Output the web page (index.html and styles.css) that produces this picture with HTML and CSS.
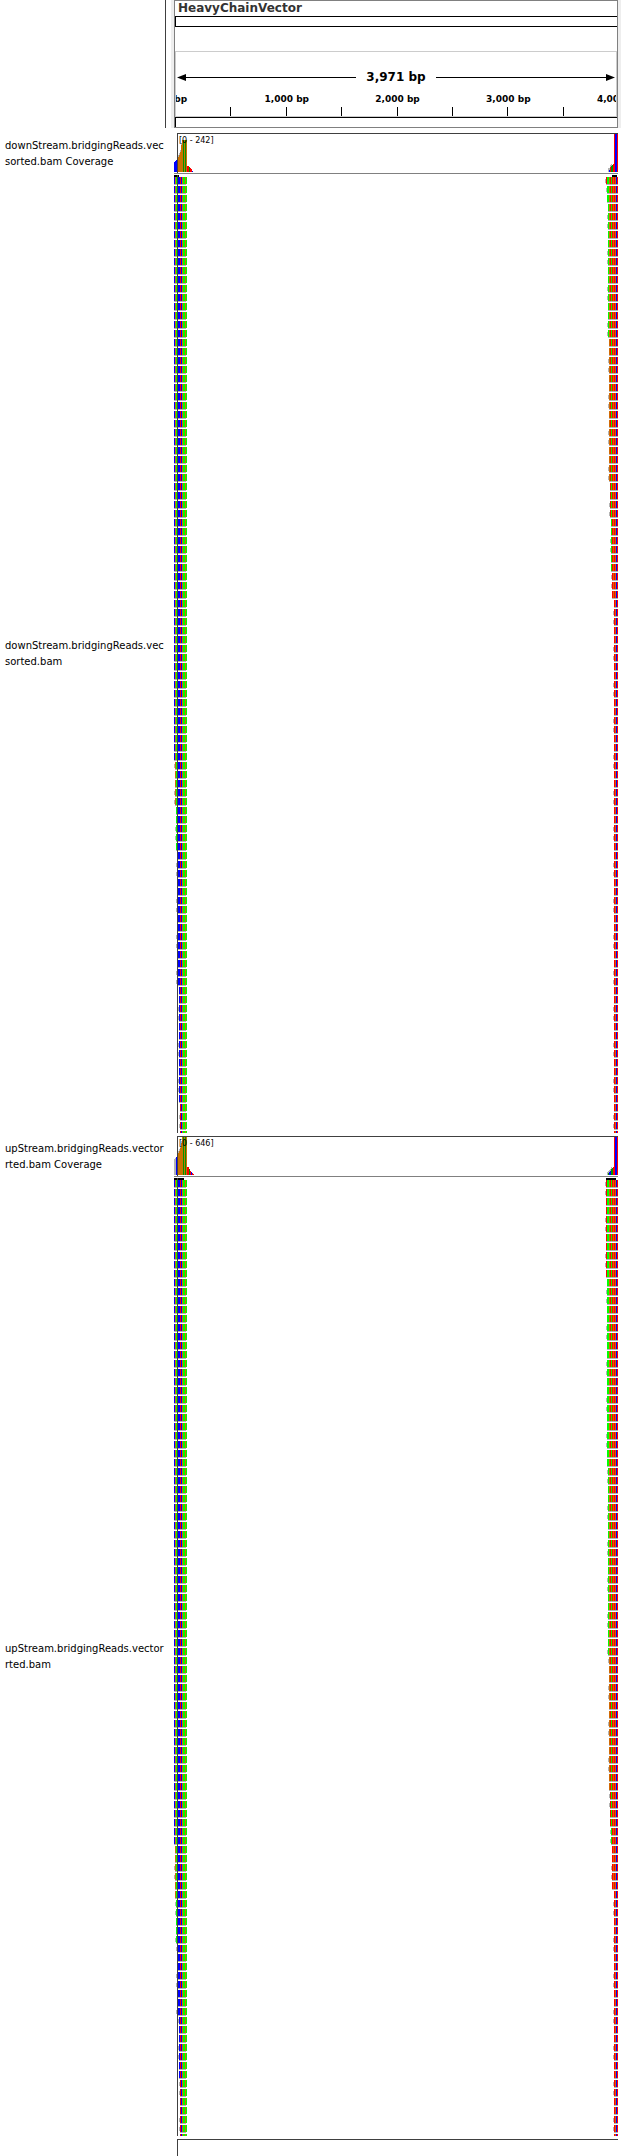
FILE: index.html
```
<!DOCTYPE html>
<html lang="en">
<head>
<meta charset="utf-8">
<title>HeavyChainVector</title>
<link rel="stylesheet" href="styles.css">
</head>
<body>
<main class="browser">
  <header class="row">
    <div></div>
    <div class="head">
      <section class="panel">
        <h1 class="title">HeavyChainVector</h1>
        <div class="ideogram"></div>
        <div class="ruler">
          <div class="span">
            <svg class="tip" width="10" height="7" viewBox="0 0 10 7"><path d="M1 3.500L10 0V7Z"/></svg>
            <i class="line"></i><b class="length">3,971 bp</b><i class="line"></i>
            <svg class="tip" width="10" height="7" viewBox="0 0 10 7"><path d="M9 3.500L0 0V7Z"/></svg>
          </div>
          <div class="marks"><span>0 bp</span><span>1,000 bp</span><span>2,000 bp</span><span>3,000 bp</span><span>4,000 bp</span></div>
          <div class="ticks"><i></i><i></i><i></i><i></i><i></i><i></i><i></i></div>
        </div>
        <div class="sequence"></div>
      </section>
    </div>
  </header>

  <section class="track">
    <div class="row">
      <p class="name">downStream.bridgingReads.vec<br>sorted.bam Coverage</p>
      <div class="data coverage"><span class="range">[0 - 242]</span>
        <svg class="plot" data-plot="cov-left" data-set="down" width="21" height="40"></svg>
        <svg class="plot" data-plot="cov-right" data-set="down" width="14" height="40"></svg>
      </div>
    </div>
    <div class="row">
      <p class="name">downStream.bridgingReads.vec<br>sorted.bam</p>
      <div class="data">
        <svg class="plot" data-plot="left" data-set="down" width="21" height="958"></svg>
        <svg class="plot" data-plot="right" data-set="down" width="14" height="958"></svg>
      </div>
    </div>
  </section>

  <section class="track">
    <div class="row">
      <p class="name">upStream.bridgingReads.vector<br>rted.bam Coverage</p>
      <div class="data coverage"><span class="range">[0 - 646]</span>
        <svg class="plot" data-plot="cov-left" data-set="up" width="21" height="40"></svg>
        <svg class="plot" data-plot="cov-right" data-set="up" width="14" height="40"></svg>
      </div>
    </div>
    <div class="row">
      <p class="name">upStream.bridgingReads.vector<br>rted.bam</p>
      <div class="data">
        <svg class="plot" data-plot="left" data-set="up" width="21" height="958"></svg>
        <svg class="plot" data-plot="right" data-set="up" width="14" height="958"></svg>
      </div>
    </div>
  </section>

  <section class="row"><div></div><div class="next"></div></section>
</main>
<script src="tracks.js"></script>
</body>
</html>
```
FILE: styles.css
```
* { box-sizing: border-box; }
body { margin: 0; background: #fff; color: #000; font-family: "DejaVu Sans", sans-serif; }
.browser { padding-right: 19px; }
.row { display: grid; grid-template-columns: 165px minmax(0, 1fr); }
.head { border-left: 1px solid #404040; padding-left: 5px; margin-bottom: 5px; }
.panel { border: 1px solid #808080; box-shadow: -3px 0 #eee, 3px 0 #eee; margin: 0 3px; }
.title { margin: 0; padding-left: 3px; height: 15px; font-size: 12px; line-height: 15px; color: #333; white-space: nowrap; }
.ideogram { height: 11px; border: 1px solid #000; border-right: 0; margin-bottom: 24px; }
.ruler { border: 1px solid #ccc; height: 66px; padding-top: 17px; overflow: hidden; }
.span { display: flex; align-items: center; height: 16px; }
.tip { flex: none; }
.line { flex: 1; height: 1px; background: #000; }
.length { padding: 0 10px; font-size: 12px; line-height: 16px; }
.marks { display: flex; height: 22px; padding-top: 7px; overflow: hidden; font-size: 9px; font-weight: bold; line-height: 14px; }
.marks span { flex: 0 0 25.18%; text-align: center; white-space: nowrap; }
.marks span:first-child { margin-left: -12.59%; }
.ticks { display: flex; height: 9px; }
.ticks i { flex: 0 0 12.59%; border-right: 1px solid #000; }
.sequence { height: 10px; border: 1px solid #000; border-width: 1px 0 0 1px; }
.track { margin-bottom: 3px; }
.name { margin: 0; align-self: center; padding-left: 5px; font-size: 10px; line-height: 16px; overflow: hidden; white-space: nowrap; }
.data { position: relative; display: flex; justify-content: space-between; margin: 0 3px 0 9px; }
.coverage { height: 42px; border-bottom: 1px solid #fff; box-shadow: inset 0 -1px #808080; }
.coverage::before { content: ""; position: absolute; top: 0; left: 3px; right: 0; height: 1px; background: #404040; }
.range { position: absolute; left: 5px; top: 3px; font-size: 8px; line-height: 10px; }
.plot { display: block; flex: none; shape-rendering: crispEdges; }
.next { height: 17px; margin: 0 3px 0 12px; border: 1px solid #404040; border-width: 1px 0 0 1px; }
```
FILE: tracks.js
```
const COLORS = { b: '#0000ff', r: '#ff0000', g: '#00ff00', o: '#d16a05', d: '#009600', c: '#c87200', y: '#b4b4b4', k: '#000', l: '#404040' };

// Base colours by column, from the outer edge of each plot.
const LEFT = 'bogbbbrboggog';
const RIGHT = 'yyrggorgrorobr';

// Each pair: offset within the track, first column with a read.
const STARTS = {
  down: { left: [[0, 0], [585, 1], [630, 2], [675, 3], [810, 5], [920, 6]], right: [[0, 2], [9, 3], [27, 4], [160, 5], [300, 6], [340, 7], [396, 8], [423, 10]] },
  up: { left: [[0, 0], [660, 1], [720, 2], [760, 3], [835, 5], [900, 6]], right: [[0, 2], [98, 3], [280, 4], [470, 5], [610, 6], [640, 7], [660, 8], [710, 10]] }
};

// Each entry: colour, top of the bar. Bars stand on row 39.
const COVERAGE = {
  down: {
    left: ['b29', 'b28', 'b27', 'c25', 'c24', 'c22', 'c19', 'c12', 'c7', 'd7', 'c7', 'd7', 'c7', 'r33', 'r33', 'd34', 'r35', 'r36', 'b38'],
    right: ['', '', '', '', 'y37', 'b37', 'r34', 'd33', 'd32', 'r31', 'r1', 'b1', 'b1', 'r1']
  },
  up: {
    left: ['y23', 'y22', 'b21', 'c19', 'c17', 'c15', 'c12', 'c7', 'c1', 'd1', 'c1', 'd1', 'c1', 'r31', 'r31', 'd33', 'r35', 'b36', 'r37', 'r38'],
    right: ['', '', '', 'y38', 'd37', 'b36', 'b35', 'd33', 'd32', 'r31', 'r1', 'b1', 'b1', 'r1']
  }
};

function rect(svg, x, y, w, h, color) {
  const el = document.createElementNS('http://www.w3.org/2000/svg', 'rect');
  for (const [k, v] of Object.entries({ x, y, width: w, height: h, fill: COLORS[color] })) el.setAttribute(k, v);
  svg.append(el);
}

function drawReads(svg, set, side) {
  const bases = side === 'left' ? LEFT : RIGHT;
  const steps = STARTS[set][side];
  if (side === 'left') rect(svg, 0, 0, set === 'down' ? 5 : 10, 2, 'k');
  else rect(svg, set === 'down' ? 8 : 2, 0, set === 'down' ? 5 : 10, 2, 'k');
  for (let y = 2, n = 0; y < 958; y += 9, n++) {
    const start = steps.filter(s => s[0] <= y - 2).pop()[1];
    if (n % 4 < 2 && start > 0) rect(svg, start - 1, y + 2, 1, 4, 'y');
    for (let x = start; x < bases.length; x++) rect(svg, x, y, 1, 7, bases[x]);
    rect(svg, start, y + 7, bases.length - start - (side === 'left' ? 1 : 0), 1, 'y');
  }
  if (side === 'left') rect(svg, 3, 0, 1, 958, 'l');
}

function drawCoverage(svg, set, side) {
  COVERAGE[set][side].forEach((bar, x) => {
    if (!bar) return;
    const top = Number(bar.slice(1));
    if (x > 2 && x < 8) rect(svg, x, top - 2, 1, 2, 'y');
    rect(svg, x, top, 1, 39 - top, bar[0]);
  });
  if (side === 'left') rect(svg, 3, 0, 1, 40, 'l');
}

document.querySelectorAll('.plot').forEach(svg => {
  const { plot, set } = svg.dataset;
  if (plot.startsWith('cov-')) drawCoverage(svg, set, plot.slice(4));
  else drawReads(svg, set, plot);
});
```
